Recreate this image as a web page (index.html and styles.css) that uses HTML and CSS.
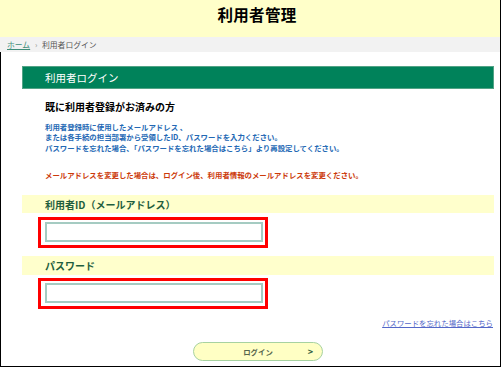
FILE: index.html
```html
<!DOCTYPE html>
<html lang="ja">
<head>
  <meta charset="utf-8">
  <title>利用者管理</title>
  <link rel="stylesheet" href="styles.css">
</head>
<body>
  <div class="page">
    <header class="site-header">
      <h1>利用者管理</h1>
    </header>
    <nav class="crumbs">
      <a href="#">ホーム</a>
      <span class="sep">›</span>
      <span class="here">利用者ログイン</span>
    </nav>
    <main class="main">
      <h2 class="title-bar">利用者ログイン</h2>
      <section class="intro">
        <h3>既に利用者登録がお済みの方</h3>
        <p class="note">利用者登録時に使用したメールアドレス 、<br>または各手続の担当部署から受領したID、パスワードを入力ください。<br>パスワードを忘れた場合、「パスワードを忘れた場合はこちら」より再設定してください。</p>
        <p class="warn">メールアドレスを変更した場合は、ログイン後、利用者情報のメールアドレスを変更ください。</p>
      </section>
      <div class="field">
        <label class="label-bar" for="uid">利用者ID（メールアドレス）</label>
        <div class="input-frame"><input id="uid" type="text"></div>
      </div>
      <div class="field pw">
        <label class="label-bar" for="pw">パスワード</label>
        <div class="input-frame"><input id="pw" type="password"></div>
      </div>
      <div class="forgot"><a href="#">パスワードを忘れた場合はこちら</a></div>
      <div class="actions">
        <button class="login" type="button"><span>ログイン</span><span class="arrow">&gt;</span></button>
      </div>
    </main>
  </div>
</body>
</html>
```

FILE: styles.css
```css
html, body {
    margin: 0;
    padding: 0;
    background: white;
}
body {
    font-family: "Noto Sans CJK JP", "Noto Sans", sans-serif;
    color: #000;
}
.page {
    width: 501px;
    height: 367px;
    box-sizing: border-box;
    border-right: 1px solid #000;
    border-bottom: 1px solid #000;
    display: flex;
    flex-direction: column;
    overflow: hidden;
}
.site-header {
    height: 37px;
    background: #ffffc9;
    display: flex;
    justify-content: center;
    align-items: flex-start;
    padding-left: 14px;
    box-sizing: border-box;
}
.site-header h1 {
    margin: 4px 0 0;
    font-size: 15.5px;
    line-height: 20px;
    font-weight: bold;
    letter-spacing: 0.3px;
}
.crumbs {
    height: 15px;
    line-height: 15px;
    background: #f2f2f2;
    font-size: 7.8px;
    padding-left: 7px;
    color: #555;
}
.crumbs a {
    color: #3f8d79;
}
.crumbs .sep {
    color: #999;
    margin: 0 3px;
}
.main {
    flex: 1;
    border-left: 1px solid #000;
    padding: 14px 6px 0 21px;
}
.title-bar {
    margin: 0;
    height: 23px;
    box-sizing: border-box;
    background: #00825a;
    border: 1px solid #52a386;
    color: white;
    font-size: 10.5px;
    font-weight: normal;
    line-height: 21px;
    padding-left: 22px;
}
.intro {
    padding-left: 23px;
}
.intro h3 {
    margin: 11px 0 0;
    font-size: 10px;
    line-height: 14px;
    font-weight: bold;
}
.note, .warn {
    font-size: 7.4px;
    line-height: 10.5px;
    font-weight: bold;
    margin: 0;
}
.note {
    margin-top: 7.5px;
    color: #2368b4;
}
.warn {
    margin-top: 17px;
    color: #cc3a0a;
}
.field {
    margin-top: 14px;
}
.field.pw {
    margin-top: 8px;
}
.label-bar {
    display: block;
    height: 18px;
    line-height: 20px;
    background: #ffffcc;
    color: #1f5e3e;
    font-size: 10px;
    font-weight: bold;
    padding-left: 23px;
}
.field.pw .label-bar {
    height: 19px;
}
.input-frame {
    width: 230px;
    height: 31px;
    box-sizing: border-box;
    margin: 4px 0 0 16px;
    border: 3px solid #ff0000;
    padding: 2px 2px 3px 4px;
    background: white;
}
.field.pw .input-frame {
    margin-top: 3px;
}
.input-frame input {
    display: block;
    width: 218px;
    height: 20px;
    box-sizing: border-box;
    margin: 0;
    border: 2px solid #a5cbc2;
    background: white;
    outline: none;
}
.forgot {
    margin-top: 9px;
    text-align: right;
    padding-right: 1px;
    font-size: 7.4px;
    line-height: 10.5px;
}
.forgot a {
    color: #5467c8;
}
.actions {
    display: flex;
    justify-content: center;
    margin-top: 13.5px;
}
.login {
    width: 130px;
    height: 19px;
    box-sizing: border-box;
    border: 1.5px solid #a7d2a0;
    border-radius: 10px;
    background: #ffffc4;
    display: flex;
    align-items: center;
    justify-content: center;
    position: relative;
    padding: 0;
    font-family: inherit;
    font-size: 7.4px;
    color: #56664c;
    font-weight: bold;
}
.login .arrow {
    position: absolute;
    right: 9px;
    top: 2px;
    font-size: 9px;
    color: #2f6040;
    font-weight: bold;
}
```
